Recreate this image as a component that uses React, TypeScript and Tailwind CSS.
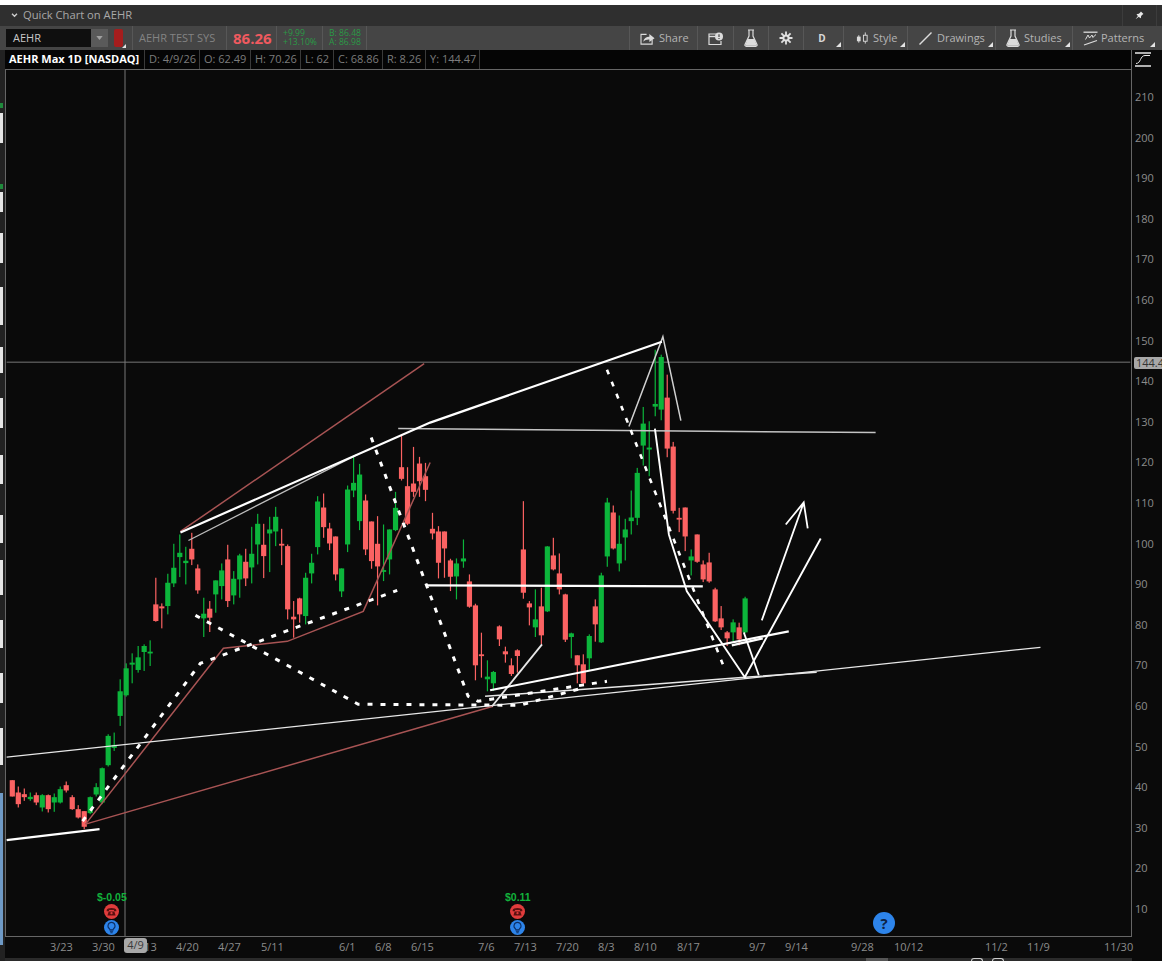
import { ReactNode } from "react";

type Row = [number, number, number, number, number, "g" | "r"];

// x, wick top, wick bottom, body top, body bottom
const rowsA: Row[] = [
  [35, 663, 712, 663, 712, "r"], [53, 682, 745, 700, 735, "r"], [71, 688, 725, 705, 714, "r"],
  [89, 700, 725, 713, 720, "g"], [107, 700, 738, 708, 730, "r"], [125, 705, 757, 708, 745, "g"],
  [143, 706, 760, 708, 750, "r"], [161, 703, 758, 714, 730, "g"], [179, 682, 733, 690, 730, "g"],
  [197, 667, 700, 678, 694, "r"], [215, 708, 752, 714, 750, "r"], [233, 738, 778, 750, 775, "r"],
  [251, 756, 810, 756, 803, "r"], [269, 712, 765, 714, 762, "g"], [287, 672, 712, 684, 706, "g"],
  [305, 625, 735, 627, 730, "g"], [323, 525, 622, 530, 618, "g"], [341, 520, 575, 557, 566, "g"],
  [359, 360, 500, 396, 470, "g"], [377, 312, 412, 327, 408, "g"], [395, 282, 372, 310, 316, "g"],
  [413, 260, 340, 294, 332, "g"], [431, 255, 335, 260, 278, "g"], [449, 243, 320, 277, 281, "g"],
];

const rowsB: Row[] = [
  [76, 475, 607, 555, 605, "r"], [94, 552, 627, 561, 567, "r"], [112, 463, 585, 490, 560, "g"],
  [130, 373, 503, 445, 492, "g"], [148, 345, 473, 400, 413, "g"], [166, 382, 495, 424, 431, "g"],
  [184, 340, 437, 388, 420, "r"], [202, 435, 523, 447, 513, "r"], [220, 535, 653, 583, 597, "g"],
  [238, 545, 638, 568, 595, "r"], [256, 483, 580, 483, 525, "g"], [274, 432, 540, 453, 500, "g"],
  [292, 376, 563, 420, 545, "r"], [310, 455, 555, 478, 528, "g"], [328, 403, 535, 408, 480, "g"],
  [346, 388, 500, 427, 477, "r"], [364, 322, 492, 403, 444, "g"], [382, 283, 435, 313, 375, "g"],
  [400, 313, 476, 376, 410, "r"], [418, 292, 458, 330, 342, "g"], [436, 262, 380, 292, 336, "g"],
  [454, 328, 437, 373, 378, "r"], [472, 375, 600, 380, 570, "r"], [490, 545, 655, 592, 600, "r"],
  [508, 535, 610, 537, 585, "r"], [526, 460, 615, 475, 590, "g"], [544, 403, 492, 430, 462, "g"],
  [562, 230, 405, 246, 383, "g"], [580, 222, 355, 264, 323, "r"], [598, 310, 392, 327, 372, "r"],
  [616, 351, 483, 351, 465, "r"], [634, 447, 533, 447, 516, "g"], [652, 198, 398, 210, 375, "g"],
  [670, 108, 233, 190, 213, "g"], [688, 133, 332, 165, 305, "g"], [706, 225, 407, 243, 390, "r"],
  [724, 306, 448, 306, 425, "r"], [742, 290, 558, 373, 441, "r"], [760, 315, 485, 452, 455, "g"],
  [778, 330, 465, 330, 420, "g"], [796, 217, 335, 265, 332, "g"], [814, 45, 183, 143, 178, "r"],
  [832, 143, 317, 200, 313, "r"], [850, 82, 232, 192, 217, "r"], [868, 112, 232, 132, 185, "r"],
  [886, 130, 245, 170, 211, "r"],
];

const rowsC: Row[] = [
  [97, 100, 180, 148, 162, "r"], [115, 140, 297, 156, 250, "r"], [133, 156, 295, 156, 207, "r"],
  [151, 238, 335, 243, 292, "r"], [169, 237, 360, 252, 291, "g"], [190, 180, 265, 237, 246, "g"],
  [208, 285, 385, 306, 382, "r"], [226, 373, 603, 378, 558, "r"], [244, 460, 595, 525, 530, "r"],
  [262, 543, 636, 592, 600, "g"], [280, 575, 635, 578, 612, "g"], [298, 438, 500, 441, 480, "r"],
  [316, 502, 550, 516, 525, "r"], [334, 537, 590, 558, 584, "r"], [352, 510, 580, 513, 530, "r"],
  [370, 65, 358, 210, 340, "r"], [388, 365, 438, 372, 384, "r"], [406, 330, 473, 420, 444, "g"],
  [424, 325, 495, 381, 468, "r"], [442, 200, 398, 201, 396, "g"], [460, 175, 273, 228, 270, "r"],
  [478, 222, 345, 282, 330, "r"], [496, 343, 488, 345, 481, "r"], [514, 460, 537, 462, 473, "g"],
  [532, 528, 612, 528, 558, "r"], [550, 525, 618, 555, 612, "r"], [568, 465, 572, 470, 537, "g"],
  [586, 360, 487, 381, 435, "r"], [604, 280, 491, 288, 489, "g"], [622, 55, 262, 69, 231, "g"],
  [640, 78, 210, 99, 207, "r"], [658, 108, 276, 193, 252, "g"], [676, 118, 243, 150, 174, "g"],
  [694, 33, 165, 114, 125, "g"],
];

const rowsD: Row[] = [
  [142, 415, 587, 430, 565, "g"], [160, 232, 408, 282, 348, "g"], [178, 275, 440, 354, 360, "g"],
  [196, 60, 260, 223, 231, "g"], [214, 75, 272, 82, 240, "g"], [232, 135, 383, 204, 357, "r"],
  [250, 337, 552, 351, 544, "r"], [268, 535, 608, 565, 570, "r"], [286, 534, 665, 534, 621, "r"],
  [304, 660, 738, 681, 693, "g"], [322, 615, 700, 615, 697, "r"], [340, 693, 758, 705, 750, "r"],
  [358, 670, 760, 699, 756, "r"], [376, 775, 878, 780, 876, "r"], [394, 830, 902, 867, 894, "r"],
  [412, 905, 950, 909, 927, "r"], [430, 870, 935, 879, 909, "g"], [448, 880, 948, 894, 930, "r"],
  [466, 802, 912, 807, 909, "g"],
];

function place(ox: number, oy: number, rows: Row[]) {
  return rows.map(([x, wt, wb, bt, bb, c]) => ({
    x: ox + x / 3,
    wt: oy + wt / 3,
    wb: oy + wb / 3,
    bt: oy + bt / 3,
    bb: oy + bb / 3,
    c,
  }));
}

const candles = [
  ...place(0, 560, rowsA),
  ...place(130, 420, rowsB),
  ...place(400, 480, rowsC),
  ...place(590, 330, rowsD),
];

const dates = [
  ["3/23", 50], ["3/30", 92], ["4/13", 134], ["4/20", 176], ["4/27", 218], ["5/11", 261],
  ["6/1", 339], ["6/8", 375], ["6/15", 411], ["7/6", 478], ["7/13", 514], ["7/20", 556],
  ["8/3", 598], ["8/10", 634], ["8/17", 677], ["9/7", 749], ["9/14", 785], ["9/28", 851],
  ["10/12", 894], ["11/2", 985], ["11/9", 1027], ["11/30", 1104],
] as const;

const prices = [210, 200, 190, 180, 170, 160, 150, 140, 130, 120, 110, 100, 90, 80, 70, 60, 50, 40, 30, 20, 10];

function Corner() {
  return (
    <svg viewBox="0 0 5 5" className="absolute bottom-[3px] right-[2px] w-[5px] h-[5px]">
      <polygon points="5,0 5,5 0,5" fill="#e4e4e4" />
    </svg>
  );
}

function ToolButton({ width, corner, children }: { width: string; corner?: boolean; children: ReactNode }) {
  return (
    <div className={`relative flex items-center h-full border-l border-[#575757] ${width}`}>
      {children}
      {corner && <Corner />}
    </div>
  );
}

function Flask({ className }: { className: string }) {
  return (
    <svg viewBox="0 0 14 18" className={className}>
      <path d="M4 1h6M5 1v6L1 15.5c-.4 1 .2 1.8 1.2 1.8h9.6c1 0 1.6-.8 1.2-1.8L9 7V1" fill="none" stroke="#dcdcdc" strokeWidth="1.2" />
      <path d="M3.6 10h6.8l2.5 6.8H1.1z" fill="#dcdcdc" />
    </svg>
  );
}

function Cell({ width, children }: { width: string; children: ReactNode }) {
  return <div className={`flex items-center h-full border-r border-[#3a3a3a] pl-[4px] text-[#7c7c7c] ${width}`}>{children}</div>;
}

function PhoneBadge() {
  return (
    <svg viewBox="0 0 16 16" className="w-[15px] h-[15px]">
      <circle cx="8" cy="8" r="8" fill="#e03c3c" />
      <path d="M2.8 6.6C3 3.6 13 3.6 13.2 6.6l-.1 1.2h-2.5V6.4H5.4v1.4H2.9z" fill="#5a1010" />
      <path d="M5 8h6l1.4 4.2H3.6z" fill="#5a1010" />
      <circle cx="8" cy="9.8" r="1.2" fill="#e03c3c" />
    </svg>
  );
}

function BulbBadge() {
  return (
    <svg viewBox="0 0 16 16" className="w-[15px] h-[15px]">
      <circle cx="8" cy="8" r="8" fill="#2d84ea" />
      <path d="M8 2.6a3.7 3.7 0 0 0-2.2 6.7c.4.3.5.7.5 1.2h3.4c0-.5.1-.9.5-1.2A3.7 3.7 0 0 0 8 2.6z" fill="none" stroke="#0d2f66" strokeWidth="1.2" />
      <path d="M6.3 12h3.4M6.8 13.6h2.4" stroke="#0d2f66" strokeWidth="1.2" />
    </svg>
  );
}

function Earnings({ label, className }: { label: string; className: string }) {
  return (
    <div className={`absolute flex flex-col items-center ${className}`}>
      <span className="text-[10.5px] leading-[12px] font-bold text-[#12b23c] font-['Liberation_Sans',sans-serif]">{label}</span>
      <div className="mt-[1px]"><PhoneBadge /></div>
      <div className="mt-[1px]"><BulbBadge /></div>
    </div>
  );
}

function Chart() {
  return (
    <svg viewBox="6 70 1125 867" className="absolute inset-0 w-full h-full" fill="none">
      <path d="M124.5 70V937M6 362.5H1131" stroke="#777" strokeWidth="1" />
      {candles.map((k, i) => (
        <g key={i} fill={k.c === "g" ? "#0cb53b" : "#fb6262"}>
          <rect x={k.x - 0.6} y={k.wt} width="1.2" height={k.wb - k.wt} />
          <rect x={k.x - 2.6} y={k.bt} width="5.2" height={Math.max(k.bb - k.bt, 1.8)} />
        </g>
      ))}
      <g stroke="#a85454" strokeWidth="1.5">
        <path d="M85 825L493 707" />
        <path d="M85 825L223 649L287 642L363 612L430 463" />
        <path d="M180 532L424 364" />
      </g>
      <g stroke="#e8e8e8" strokeWidth="1.3">
        <path d="M6 758L1041 648" />
        <path d="M188 541L357 455" stroke="#bdbdbd" />
        <path d="M398 429L876 433" stroke="#c4c4c4" strokeWidth="1.5" />
        <path d="M629 427L663 337L681 421" stroke="#d0d0d0" strokeWidth="1.5" />
        <path d="M492 707L542 645" strokeWidth="1.8" />
        <path d="M485 697L640 686L745 678L817 673" strokeWidth="1.5" />
      </g>
      <g stroke="#fff" strokeWidth="2.2">
        <path d="M6 841L99 830" />
        <path d="M180 533L430 423L662 342" />
        <path d="M426 586L703 587" />
        <path d="M655 429L669 535L687 592L745 678L821 539" strokeWidth="1.9" />
        <path d="M762 621L804 503M786 525L804 503L808 529" strokeWidth="1.8" />
        <path d="M744 633L759 676" strokeWidth="1.8" />
        <path d="M732 646L763 639" />
        <path d="M490 691L789 632" />
      </g>
      <g stroke="#fff" strokeWidth="3" strokeDasharray="5 8">
        <path d="M82 822L200 664L227 654L288 631L397 591" />
        <path d="M195 616L276 660L358 705L520 706L585 688" />
        <path d="M371 438L468 697L478 702L607 682" />
        <path d="M607 370L723 665" strokeWidth="2.6" />
      </g>
    </svg>
  );
}

export default function App() {
  return (
    <div className="flex flex-col w-[1162px] h-[961px] overflow-hidden bg-[#0a0a0a] text-[11px] font-['Open_Sans',sans-serif]">
      <div className="h-[5px] flex-none bg-white" />

      <div className="flex items-center flex-none h-[21px] bg-[#2f2f2f] text-[#a8a8a8]">
        <svg viewBox="0 0 8 6" className="w-[7px] h-[5px] ml-[11px] mr-[5px]">
          <path d="M1 1l3 3 3-3" fill="none" stroke="#d0d0d0" strokeWidth="1.6" />
        </svg>
        <span className="text-[11.2px]">Quick Chart on AEHR</span>
        <div className="flex items-center justify-center ml-auto mr-[5px] w-[35px] h-full border-x border-[#3c3c3c]">
          <svg viewBox="0 0 10 10" className="w-[9px] h-[9px]">
            <path d="M6.6.6l2.8 2.8-.9.4-1.7 1.7-.2 1.9-.7.7-1.6-1.6L1 9l-.2-.2 2.5-3.3-1.6-1.6.7-.7 1.9-.2L6 1.3z" fill="#e8e8e8" />
          </svg>
        </div>
      </div>

      <div className="flex items-center flex-none h-[24px] pl-[6px] pr-[5px] bg-[#454545] text-[#b4b4b4]">
        <div className="flex items-center justify-between w-[102px] h-[18px] pl-[7px] bg-[#0f0f0f] text-[#c8c8c8]">
          <span>AEHR</span>
          <div className="flex items-center justify-center w-[17px] h-full bg-[#5a5a5a]">
            <svg viewBox="0 0 8 5" className="w-[7px] h-[4px]"><polygon points="0,0 8,0 4,5" fill="#a0a0a0" /></svg>
          </div>
        </div>
        <div className="relative ml-[6px] mr-[9px] w-[9px] h-[18px] rounded-[2px] bg-[#a51d1d]">
          <svg viewBox="0 0 5 5" className="absolute -bottom-[1px] -right-[3px] w-[4px] h-[4px]">
            <polygon points="5,0 5,5 0,5" fill="#e4e4e4" />
          </svg>
        </div>
        <div className="flex items-center w-[94px] h-full pl-[6px] border-l border-[#575757] text-[#838383]">AEHR TEST SYS</div>
        <div className="flex items-center w-[50px] h-full pl-[6px] border-l border-[#575757] text-[15px] font-bold text-[#f05a5f]">86.26</div>
        <div className="flex flex-col justify-center w-[46px] h-full pl-[6px] border-l border-[#575757] text-[8.6px] leading-[9px] text-[#2a9a46]">
          <span>+9.99</span>
          <span>+13.10%</span>
        </div>
        <div className="flex flex-col justify-center w-[45px] h-full pl-[6px] border-x border-[#575757] text-[8.6px] leading-[9px] text-[#2a9a46]">
          <span>B: 86.48</span>
          <span>A: 86.98</span>
        </div>

        <div className="flex items-center h-full ml-auto">
          <ToolButton width="w-[68px]">
            <svg viewBox="0 0 16 14" className="w-[15px] h-[13px] ml-[10px] mr-[5px]" fill="none">
              <path d="M7 2.5H1v10.5h12V8" stroke="#dcdcdc" strokeWidth="1.2" />
              <path d="M3.4 10.6C4 7 6.6 5.2 10 5.2V2.2L15.6 6.6 10 10.8V8C7.4 7.8 5.2 8.6 3.4 10.6z" fill="#dcdcdc" />
            </svg>
            <span className="-ml-[1px]">Share</span>
          </ToolButton>
          <ToolButton width="w-[36px] justify-center">
            <svg viewBox="0 0 15 13" className="w-[15px] h-[13px]" fill="none">
              <path d="M8 2H1v10.5h12V9" stroke="#dcdcdc" strokeWidth="1.2" />
              <path d="M1 4.5h6" stroke="#dcdcdc" strokeWidth="1.4" />
              <circle cx="11" cy="4.5" r="4" fill="#dcdcdc" />
              <path d="M11 2.2v2.8M11 6v.9" stroke="#454545" strokeWidth="1.2" />
            </svg>
          </ToolButton>
          <ToolButton width="w-[35px] justify-center">
            <Flask className="w-[14px] h-[18px]" />
          </ToolButton>
          <ToolButton width="w-[35px] justify-center">
            <svg viewBox="0 0 14 14" className="w-[14px] h-[14px]" fill="none">
              <path d="M7 .5v13M.5 7h13M2.4 2.4l9.2 9.2M11.6 2.4l-9.2 9.2" stroke="#e0e0e0" strokeWidth="1.8" />
              <circle cx="7" cy="7" r="3.6" fill="#e0e0e0" />
              <circle cx="7" cy="7" r="1.6" fill="#454545" />
            </svg>
          </ToolButton>
          <ToolButton width="w-[40px] justify-center pr-[3px]" corner>
            <span className="text-[10px] font-bold text-[#d8d8d8]">D</span>
          </ToolButton>
          <ToolButton width="w-[64px] pl-[12px]" corner>
            <svg viewBox="0 0 14 14" className="w-[13px] h-[14px] mr-[4px]" fill="none">
              <path d="M3 4v8" stroke="#dcdcdc" />
              <rect x="1" y="5.5" width="4" height="5" fill="#dcdcdc" />
              <path d="M10 1v12" stroke="#dcdcdc" />
              <rect x="8" y="4" width="4" height="6.5" fill="#454545" stroke="#dcdcdc" />
            </svg>
            <span>Style</span>
          </ToolButton>
          <ToolButton width="w-[88px] pl-[11px]" corner>
            <svg viewBox="0 0 13 13" className="w-[13px] h-[13px] mr-[5px]" fill="none">
              <path d="M.5 12.5L12.5.5" stroke="#dcdcdc" strokeWidth="1.4" />
            </svg>
            <span>Drawings</span>
          </ToolButton>
          <ToolButton width="w-[77px] pl-[10px]" corner>
            <Flask className="w-[14px] h-[18px] mr-[4px]" />
            <span>Studies</span>
          </ToolButton>
          <ToolButton width="w-[85px] pl-[10px]" corner>
            <svg viewBox="0 0 15 15" className="w-[15px] h-[15px] mr-[3px]" fill="none">
              <path d="M.5 1.2h14" stroke="#dcdcdc" strokeWidth="1.3" />
              <path d="M2.5 8.5L5 4l1.5 3L9 4l.8 2.5L13 3.5" stroke="#dcdcdc" />
              <path d="M1 14L14 9.5" stroke="#dcdcdc" strokeWidth="1.3" />
            </svg>
            <span>Patterns</span>
          </ToolButton>
        </div>
      </div>

      <div className="flex flex-1 min-h-0">
        <div className="flex flex-col flex-none w-[5px] bg-[#222]">
          <div className="flex-none mt-[53px] h-[5px] w-[3px] bg-[#1f8a3c]" />
          <div className="flex-none mt-[5px] h-[30px] w-[3px] bg-[#e6e6e6]" />
          <div className="flex-none mt-[41px] h-[5px] w-[3px] bg-[#1f8a3c]" />
          <div className="flex-none mt-[3px] h-[20px] w-[3px] bg-[#e6e6e6]" />
          <div className="flex-none mt-[21px] h-[30px] w-[3px] bg-[#e6e6e6]" />
          <div className="flex-none mt-[24px] h-[38px] w-[3px] bg-[#e6e6e6]" />
          <div className="flex-none mt-[22px] h-[26px] w-[3px] bg-[#e6e6e6]" />
          <div className="flex-none mt-[25px] h-[30px] w-[3px] bg-[#e6e6e6]" />
          <div className="flex-none mt-[27px] h-[29px] w-[3px] bg-[#e6e6e6]" />
          <div className="flex-none mt-[31px] h-[28px] w-[3px] bg-[#e6e6e6]" />
          <div className="flex-none mt-[17px] h-[35px] w-[3px] bg-[#e6e6e6]" />
          <div className="flex-none mt-[25px] h-[28px] w-[3px] bg-[#e6e6e6]" />
          <div className="flex-none mt-[25px] h-[30px] w-[3px] bg-[#e6e6e6]" />
          <div className="flex-none mt-[25px] h-[37px] w-[3px] bg-[#e6e6e6]" />
          <div className="flex-none mt-[28px] h-[152px] w-[3px] bg-[#6f9ac6]" />
        </div>

        <div className="flex flex-col flex-1 min-w-0">
          <div className="flex items-center flex-none h-[20px] border-b border-r border-[#666] bg-[#050505]">
            <div className="flex items-center w-[140px] h-full pl-[4px] border-r border-[#3a3a3a] font-bold text-white">AEHR Max 1D [NASDAQ]</div>
            <Cell width="w-[55px]">D: 4/9/26</Cell>
            <Cell width="w-[51px]">O: 62.49</Cell>
            <Cell width="w-[50px]">H: 70.26</Cell>
            <Cell width="w-[33px]">L: 62</Cell>
            <Cell width="w-[49px]">C: 68.86</Cell>
            <Cell width="w-[43px]">R: 8.26</Cell>
            <Cell width="w-[54px]">Y: 144.47</Cell>
          </div>

          <div className="relative flex-1 min-h-0 border-l border-b border-r border-[#666]">
            <Chart />
            <Earnings label="$-0.05" className="left-[91px] bottom-[1px]" />
            <Earnings label="$0.11" className="left-[499px] bottom-[1px]" />
            <div className="absolute left-[867px] bottom-[2px] flex items-center justify-center w-[22px] h-[22px] rounded-full bg-[#2d84ea] text-[15px] font-bold text-[#0d2244]">?</div>
          </div>

          <div className="relative flex items-center flex-none h-[21px] text-[#8c8c8c]">
            <div className="w-[45px] flex-none" />
            {dates.map(([label, x], i) => (
              <span
                key={label}
                className="flex-none"
                style={{ width: i + 1 < dates.length ? dates[i + 1][1] - x : 30 }}
              >
                {label}
              </span>
            ))}
            <div className="absolute left-[119px] top-[1px] flex items-center justify-center w-[23px] h-[15px] rounded-[3px] bg-[#a8a8a8] text-[#3a3a3a]">4/9</div>
          </div>
          <div className="relative flex-none h-[3px] bg-[#2b2b2b]">
            <div className="absolute left-[861px] top-0 w-[22px] h-[3px] bg-[#555]" />
            <div className="absolute left-[966px] top-0 w-[12px] h-[3px] rounded-t-full border-t border-x border-[#ccc]" />
            <div className="absolute left-[987px] top-0 w-[12px] h-[3px] rounded-t-full border-t border-x border-[#ccc]" />
          </div>
        </div>

        <div className="relative flex flex-col flex-none w-[30px] pb-[45px] text-[#8c8c8c]">
          <div className="flex items-start justify-center flex-none h-[40px] pt-[2px] pr-[9px]">
            <svg viewBox="0 0 16 15" className="w-[16px] h-[15px]" fill="none">
              <path d="M0 1h16M0 14h16" stroke="#e8e8e8" strokeWidth="1.4" />
              <path d="M1 11.5C6 11.5 5 3.5 10 3.5h5" stroke="#e8e8e8" />
            </svg>
          </div>
          <div className="flex flex-col flex-1 justify-between pl-[3px]">
            {prices.map((p) => (
              <span key={p} className="leading-[14px]">{p}</span>
            ))}
          </div>
          <div className="absolute left-[2px] top-[307px] h-[12px] w-[28px] pl-[2px] overflow-hidden rounded-l-[2px] bg-[#a8a8a8] leading-[12px] text-[#333]">144.47</div>
        </div>
      </div>
    </div>
  );
}
